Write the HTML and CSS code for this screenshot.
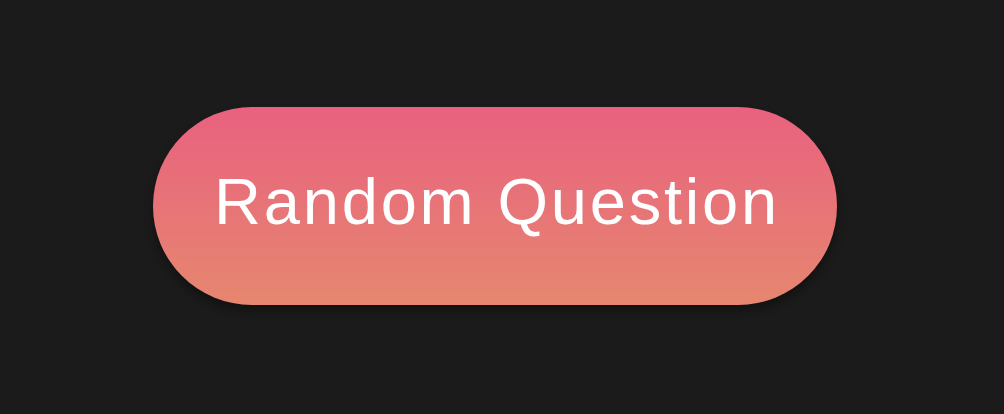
FILE: index.html
```html
<!DOCTYPE html>
<html>
<head>
<meta charset="utf-8">
<link rel="stylesheet" href="styles.css">
</head>
<body>
<main class="stage">
  <button class="random-btn">Random Question</button>
</main>
</body>
</html>
```
FILE: styles.css
```css
html, body {
  margin: 0;
  padding: 0;
  background: #1b1b1b;
  width: 1004px;
  height: 414px;
  overflow: hidden;
}
.stage {
  display: flex;
  align-items: flex-start;
  padding: 107px 0 0 153px;
}
.random-btn {
  box-sizing: border-box;
  width: 684px;
  height: 198px;
  border: none;
  border-radius: 99px;
  background: linear-gradient(to bottom, #e9617f 0%, #e6876f 100%);
  box-shadow: 0 6px 10px rgba(0, 0, 0, 0.35);
  color: #ffffff;
  font-family: "Liberation Sans", Arial, sans-serif;
  font-size: 65px;
  letter-spacing: 2.8px;
  padding: 0 0 9px 4px;
  display: flex;
  align-items: center;
  justify-content: center;
  cursor: pointer;
}
```
